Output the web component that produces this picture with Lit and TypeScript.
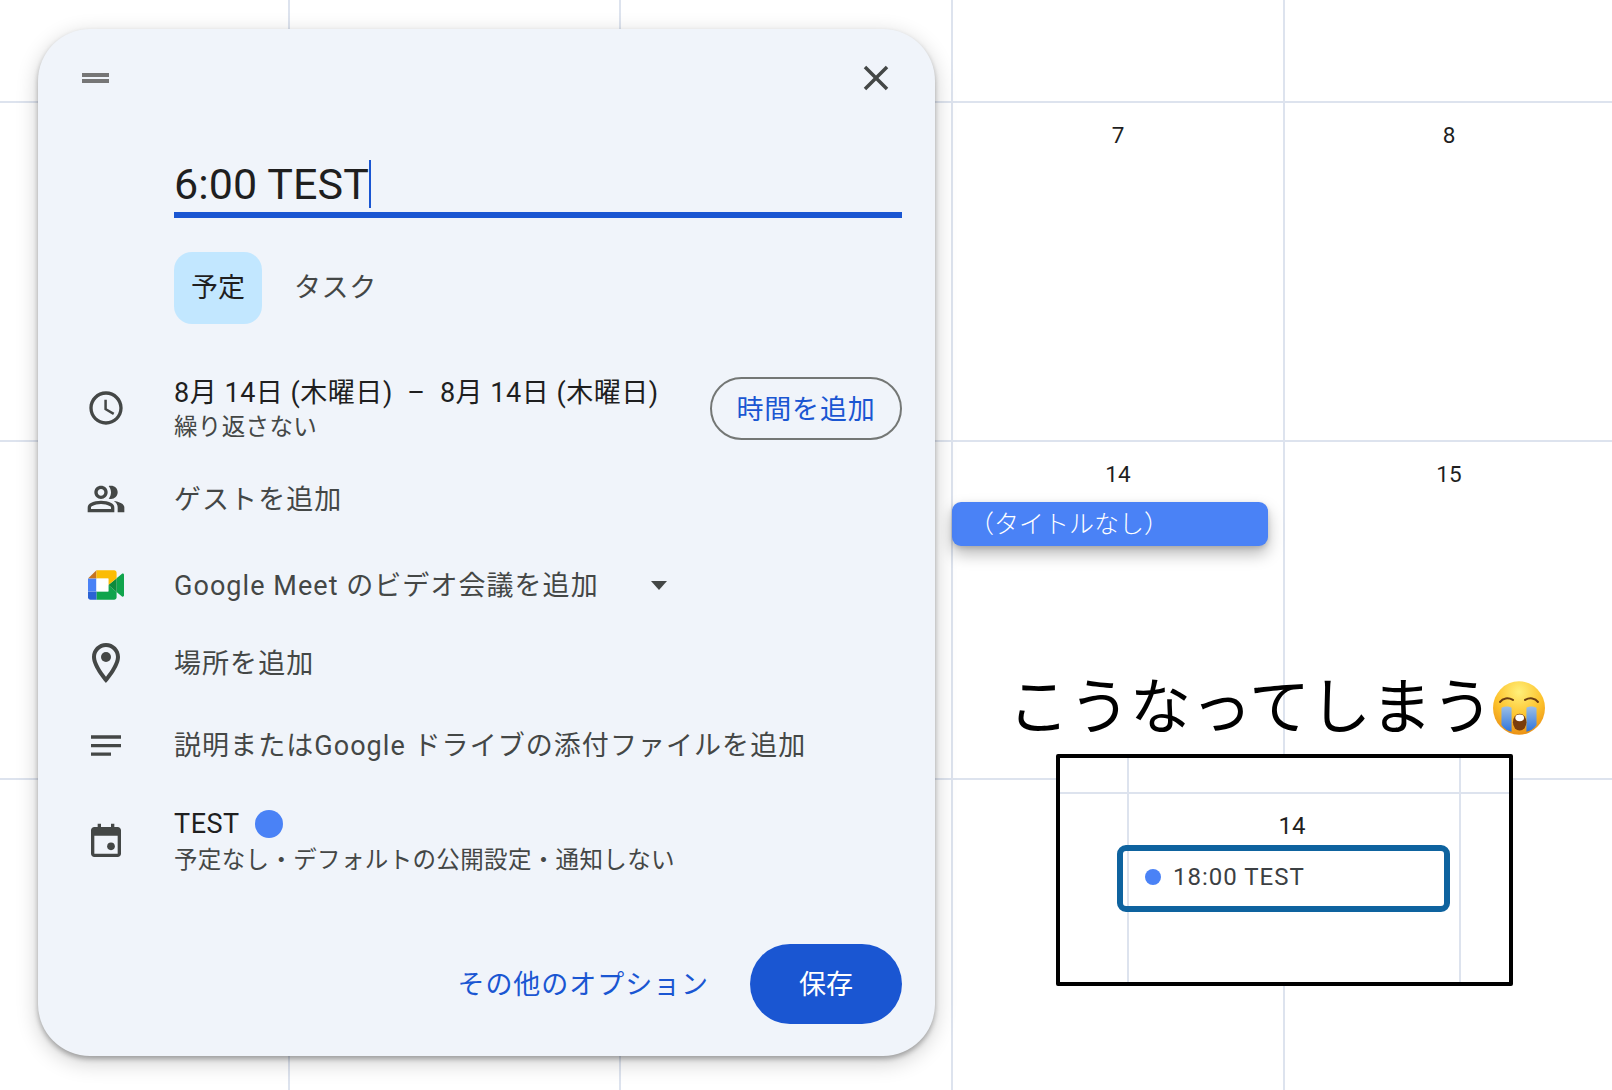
import { LitElement, html, css, svg } from 'lit';
import { customElement } from 'lit/decorators.js';

const clock = svg`<path d="M11.99 2C6.47 2 2 6.48 2 12s4.47 10 9.99 10C17.52 22 22 17.52 22 12S17.52 2 11.99 2zM12 20c-4.42 0-8-3.58-8-8s3.58-8 8-8 8 3.58 8 8-3.58 8-8 8z"/><path d="M12.5 7H11v6l5.25 3.15.75-1.23-4.5-2.67z"/>`;
const people = svg`<path d="M1 20v-2.8c0-.57.15-1.09.44-1.56.29-.47.67-.83 1.16-1.09 1.03-.52 2.08-.91 3.15-1.17C6.82 13.13 7.9 13 9 13c1.1 0 2.18.13 3.25.38 1.07.26 2.12.65 3.15 1.17.48.26.87.62 1.16 1.09.29.47.44.99.44 1.56V20H1zm18 0v-3c0-.73-.2-1.43-.61-2.1-.41-.67-.98-1.25-1.74-1.72.85.1 1.65.27 2.4.51.75.24 1.45.54 2.1.9.6.33 1.06.7 1.38 1.11.32.41.47.85.47 1.3V20h-4zM9 12c-1.1 0-2.04-.39-2.83-1.18C5.39 10.04 5 9.1 5 8s.39-2.04 1.17-2.83C6.96 4.39 7.9 4 9 4s2.04.39 2.83 1.17C12.61 5.96 13 6.9 13 8s-.39 2.04-1.17 2.82C11.04 11.61 10.1 12 9 12zm10-4c0 1.1-.39 2.04-1.17 2.82-.79.79-1.73 1.18-2.83 1.18-.18 0-.42-.02-.7-.06-.28-.04-.53-.09-.7-.14.45-.53.8-1.12 1.04-1.77.25-.65.36-1.32.36-2.03s-.12-1.38-.36-2.03c-.24-.65-.59-1.24-1.04-1.77.23-.08.47-.14.7-.16.23-.03.47-.04.7-.04 1.1 0 2.04.39 2.83 1.17C18.61 5.96 19 6.9 19 8zM3 18h12v-.8c0-.18-.05-.35-.14-.5-.09-.15-.21-.27-.36-.35-.9-.45-1.81-.79-2.73-1.01C10.85 15.11 9.93 15 9 15s-1.85.11-2.77.34c-.92.23-1.83.56-2.73 1.01-.15.08-.27.2-.36.35-.09.15-.14.32-.14.5v.8zm6-8c.55 0 1.02-.2 1.41-.59C10.8 9.02 11 8.55 11 8s-.2-1.02-.59-1.41C10.02 6.2 9.55 6 9 6s-1.02.2-1.41.59C7.2 6.98 7 7.45 7 8s.2 1.02.59 1.41C7.98 9.8 8.45 10 9 10z"/>`;
const pin = svg`<path d="M12 2C8.13 2 5 5.13 5 9c0 5.25 7 13 7 13s7-7.75 7-13c0-3.87-3.13-7-7-7zM7 9c0-2.76 2.24-5 5-5s5 2.24 5 5c0 2.88-2.88 7.19-5 9.88C9.92 16.21 7 11.85 7 9z"/><circle cx="12" cy="9" r="2.5"/>`;
const notes = svg`<path d="M3 6.2h18v2H3zM3 11.4h18v2H3zM3 16.5h12v2H3z"/>`;
const cal = svg`<path fill-rule="evenodd" d="M7 1h2v2h6V1h2v2h2c1.1 0 2 .9 2 2v14c0 1.1-.9 2-2 2H5c-1.1 0-2-.9-2-2V5c0-1.1.9-2 2-2h2zM5 8.2V19h14V8.2z"/><circle cx="15" cy="14.6" r="2.3"/>`;

@customElement('app-root')
export class AppRoot extends LitElement {
	static styles = css`
		:host {
			display: block;
			position: relative;
			width: 1612px;
			height: 1090px;
			overflow: hidden;
			background: #fff;
			color: #1f1f1f;
			font-family: Roboto, 'Noto Sans CJK JP', sans-serif;
		}
		.grid {
			display: grid;
			grid-template-columns: 290px 331px 332px 332px 340px;
			grid-template-rows: 103px 339px 338px 320px;
			height: 1100px;
		}
		.cell {
			border-right: 2px solid #dde3ee;
			border-bottom: 2px solid #dde3ee;
			text-align: center;
		}
		.date {
			padding-top: 20px;
			font-size: 22.5px;
			line-height: 24px;
		}
		.wide {
			padding-right: 10px;
		}
		.chip {
			display: flex;
			align-items: center;
			box-sizing: border-box;
			width: 316px;
			height: 44px;
			margin: 16px 0 0 -1px;
			padding: 0 0 4px 17px;
			border-radius: 9px;
			background: #4a82f6;
			color: #fff;
			font-size: 25px;
			font-weight: 300;
			box-shadow: 0 8px 16px rgba(0, 0, 0, 0.28), 0 2px 5px rgba(0, 0, 0, 0.14);
		}

		.dialog {
			position: absolute;
			left: 38px;
			top: 29px;
			box-sizing: border-box;
			width: 897px;
			height: 1027px;
			padding-right: 33px;
			border-radius: 52px;
			background: #f0f4fa;
			box-shadow: 0 3px 5px rgba(0, 0, 0, 0.28), 0 6px 22px rgba(0, 0, 0, 0.2);
		}
		.head {
			display: flex;
			justify-content: space-between;
			align-items: center;
			height: 98px;
			padding-left: 44px;
			margin-right: 5px;
		}
		.grip {
			display: flex;
			flex-direction: column;
			gap: 2px;
			width: 27px;
		}
		.grip i {
			height: 4px;
			background: #767676;
		}
		.close {
			width: 42px;
			height: 42px;
			fill: #444746;
		}
		.main {
			margin-left: 136px;
		}
		.title {
			display: flex;
			align-items: center;
			height: 48px;
			margin-top: 33px;
			font-size: 43px;
			letter-spacing: 0.1px;
			line-height: 48px;
		}
		.caret {
			width: 2px;
			height: 48px;
			background: #1a56d2;
		}
		.rule {
			height: 6px;
			margin-top: 4px;
			background: #1a56d2;
		}
		.tabs {
			display: flex;
			align-items: center;
			margin-top: 34px;
			font-size: 27px;
		}
		.tab {
			display: flex;
			align-items: center;
			justify-content: center;
			box-sizing: border-box;
			width: 88px;
			height: 72px;
			margin-right: 32px;
			padding-bottom: 6px;
			border-radius: 18px;
			background: #c2e7ff;
		}
		.other {
			color: #444746;
			padding-bottom: 6px;
			letter-spacing: 0.6px;
		}
		.row {
			display: grid;
			grid-template-columns: 136px 1fr;
			align-items: center;
			color: #444746;
			font-size: 27px;
			letter-spacing: 1.05px;
		}
		.row > div {
			padding-bottom: 4px;
		}
		.row svg.icon {
			justify-self: center;
			width: 40px;
			height: 40px;
			fill: #444746;
		}
		.row svg.big {
			width: 48px;
			height: 48px;
		}
		.row svg.logo {
			width: 36px;
			height: 30px;
		}
		.when {
			margin-top: 50px;
			height: 63px;
		}
		.row.when > div {
			padding-bottom: 0;
		}
		.when .text {
			display: flex;
			justify-content: space-between;
			align-items: center;
		}
		.dark {
			color: #1f1f1f;
			line-height: 38px;
			letter-spacing: 0.52px;
		}
		.sub {
			font-size: 23.5px;
			line-height: 30px;
			letter-spacing: 0.35px;
		}
		.outline {
			box-sizing: border-box;
			display: flex;
			align-items: center;
			justify-content: center;
			width: 192px;
			height: 63px;
			padding-bottom: 2px;
			border: 2px solid #747775;
			border-radius: 32px;
			color: #1a56d2;
			font-size: 27px;
			letter-spacing: 0.8px;
		}
		.guests {
			margin-top: 32px;
			height: 60px;
		}
		.meet {
			margin-top: 26px;
			height: 60px;
		}
		.meet .text {
			display: flex;
			align-items: center;
		}
		.arrow {
			width: 16px;
			height: 9px;
			margin: 4px 0 0 52px;
			fill: #444746;
		}
		.place {
			margin-top: 18px;
			height: 60px;
		}
		.desc {
			margin-top: 22px;
			height: 60px;
		}
		.calendar {
			margin-top: 28px;
			height: 66px;
		}
		.row.calendar > div {
			padding-bottom: 5px;
		}
		.calname {
			display: flex;
			align-items: center;
			gap: 15px;
			line-height: 42px;
		}
		.dot {
			width: 28px;
			height: 28px;
			border-radius: 50%;
			background: #4a82f6;
		}
		.foot {
			display: flex;
			justify-content: flex-end;
			align-items: center;
			margin-top: 75px;
			gap: 41px;
			font-size: 27px;
		}
		.link {
			color: #1a56d2;
			letter-spacing: 0.95px;
			padding-bottom: 4px;
		}
		.save {
			display: flex;
			align-items: center;
			justify-content: center;
			box-sizing: border-box;
			width: 152px;
			height: 80px;
			padding-bottom: 4px;
			border-radius: 40px;
			background: #1a56d2;
			color: #fff;
		}

		.note {
			position: absolute;
			left: 1008px;
			top: 672px;
		}
		.note h1 {
			display: flex;
			align-items: center;
			margin: 0;
			height: 72px;
			color: #000;
			font-size: 61px;
			font-weight: 400;
			line-height: 72px;
			white-space: nowrap;
		}
		.emoji {
			width: 54px;
			height: 54px;
			margin-left: -1px;
		}
		.box {
			display: grid;
			grid-template-columns: 69px 332px 1fr;
			grid-template-rows: 36px 1fr;
			box-sizing: border-box;
			width: 457px;
			height: 232px;
			margin: 10px 0 0 48px;
			border: 4px solid #000;
			border-radius: 2px;
			background: #fff;
		}
		.box div {
			border-color: #dde3ee;
			border-style: solid;
			border-width: 0;
		}
		.box .top {
			border-bottom-width: 2px;
		}
		.box .lft {
			border-right-width: 2px;
		}
		.box .mid .num {
			margin-top: 18px;
			padding-right: 4px;
			text-align: center;
			font-size: 24px;
			line-height: 28px;
		}
		.box .pick {
			display: flex;
			align-items: center;
			gap: 12px;
			box-sizing: border-box;
			width: 333px;
			height: 67px;
			margin: 5px 0 0 -12px;
			padding: 0 0 4px 22px;
			border: 6px solid #0e639f;
			border-radius: 9px;
			color: #3c4043;
			font-size: 24px;
			letter-spacing: 1px;
		}
		.box .pick span {
			flex: none;
			width: 16px;
			height: 16px;
			border-radius: 50%;
			background: #4a82f6;
		}
	`;

	render() {
		return html`
			<div class="grid">
				${Array.from({ length: 20 }, (_, i) => {
					if (i === 8) return html`<div class="cell"><div class="date">7</div></div>`;
					if (i === 9) return html`<div class="cell"><div class="date wide">8</div></div>`;
					if (i === 13)
						return html`<div class="cell"><div class="date">14</div><div class="chip">（タイトルなし）</div></div>`;
					if (i === 14) return html`<div class="cell"><div class="date wide">15</div></div>`;
					return html`<div class="cell"></div>`;
				})}
			</div>

			<section class="dialog">
				<div class="head">
					<div class="grip"><i></i><i></i></div>
					<svg class="close" viewBox="0 0 24 24"><path d="M19 6.41L17.59 5 12 10.59 6.41 5 5 6.41 10.59 12 5 17.59 6.41 19 12 13.41 17.59 19 19 17.59 13.41 12z"/></svg>
				</div>
				<div class="main">
					<div class="title">6:00 TEST<span class="caret"></span></div>
					<div class="rule"></div>
					<div class="tabs">
						<div class="tab">予定</div>
						<div class="other">タスク</div>
					</div>
				</div>
				<div class="row when">
					<svg class="icon" viewBox="0 0 24 24">${clock}</svg>
					<div class="text">
						<div>
							<div class="dark">8月 14日 (木曜日) &nbsp;–&nbsp; 8月 14日 (木曜日)</div>
							<div class="sub">繰り返さない</div>
						</div>
						<div class="outline">時間を追加</div>
					</div>
				</div>
				<div class="row guests">
					<svg class="icon" viewBox="0 0 24 24">${people}</svg>
					<div>ゲストを追加</div>
				</div>
				<div class="row meet">
					<svg class="icon logo" viewBox="0 0 87.5 72">
						<path fill="#10a44c" d="M82.6 8.68L69.5 19.42v33.66l13.16 10.79c1.97 1.54 4.85.135 4.85-2.37V11c0-2.535-2.945-3.925-4.91-2.32zM49.5 36v15.5h-29V72h43c3.315 0 6-2.685 6-6V53.08z"/>
						<path fill="#0e8a3c" d="M49.5 36l20-16.58v33.66z"/>
						<path fill="#2a62d4" d="M0 51.5V66c0 3.315 2.685 6 6 6h14.5V51.5z"/>
						<path fill="#c5731f" d="M20.5 0L0 20.5h20.5z"/>
						<path fill="#4a82f6" d="M20.5 20.5H0v31h20.5z"/>
						<path fill="#fbbc04" d="M63.5 0h-43v20.5h29V36l20-16.57V6c0-3.315-2.685-6-6-6z"/>
						<path fill="#fff" d="M20.5 20.5h29v31h-29z"/>
					</svg>
					<div class="text">Google Meet のビデオ会議を追加
						<svg class="arrow" viewBox="0 0 16 9"><path d="M0 0h16L8 9z"/></svg>
					</div>
				</div>
				<div class="row place">
					<svg class="icon big" viewBox="0 0 24 24">${pin}</svg>
					<div>場所を追加</div>
				</div>
				<div class="row desc">
					<svg class="icon" viewBox="0 0 24 24">${notes}</svg>
					<div>説明またはGoogle ドライブの添付ファイルを追加</div>
				</div>
				<div class="row calendar">
					<svg class="icon" viewBox="0 0 24 24">${cal}</svg>
					<div>
						<div class="dark calname">TEST<span class="dot"></span></div>
						<div class="sub">予定なし・デフォルトの公開設定・通知しない</div>
					</div>
				</div>
				<div class="foot">
					<div class="link">その他のオプション</div>
					<div class="save">保存</div>
				</div>
			</section>

			<aside class="note">
				<h1>こうなってしまう<svg class="emoji" viewBox="0 0 160 160">
					<defs>
						<radialGradient id="face" cx="0.5" cy="0.2" r="0.85">
							<stop offset="0" stop-color="#fff07a"/>
							<stop offset="0.55" stop-color="#fdc22c"/>
							<stop offset="1" stop-color="#e88a12"/>
						</radialGradient>
						<linearGradient id="tear" x1="0" y1="0" x2="0" y2="1">
							<stop offset="0" stop-color="#9cbfe6"/>
							<stop offset="1" stop-color="#2e74dc"/>
						</linearGradient>
					</defs>
					<ellipse cx="80" cy="80" rx="77" ry="79" fill="url(#face)"/>
					<path d="M24 62c8-12 24-14 38-6M136 62c-8-12-24-14-38-6" fill="none" stroke="#6b3d12" stroke-width="6" stroke-linecap="round"/>
					<path d="M28 80c6-6 26-6 30 0v70c-10-2-22-8-30-20zM132 80c-6-6-26-6-30 0v70c10-2 22-8 30-20z" fill="url(#tear)"/>
					<ellipse cx="82" cy="122" rx="20" ry="25" fill="#7a3d0c"/>
					<ellipse cx="82" cy="109" rx="13" ry="10" fill="#fff"/>
				</svg></h1>
				<div class="box">
					<div class="top lft"></div>
					<div class="top lft"></div>
					<div class="top"></div>
					<div class="lft"></div>
					<div class="lft mid">
						<div class="num">14</div>
						<div class="pick"><span></span>18:00 TEST</div>
					</div>
					<div></div>
				</div>
			</aside>
		`;
	}
}
